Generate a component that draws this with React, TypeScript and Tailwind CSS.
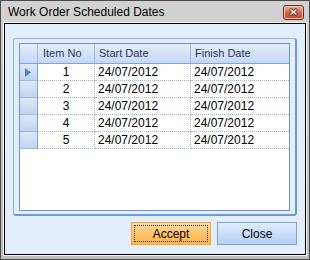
const rows = [1, 2, 3, 4, 5];

function CloseBox() {
  return (
    <div className="w-[21px] h-[15px] rounded-[3px] border border-[#6b2a1c] bg-gradient-to-b from-[#eab4a3] via-[#d9674b] to-[#c0452a] flex items-center justify-center shadow-[inset_0_0_0_1px_#f3c6b8]">
      <svg width="9" height="8" viewBox="0 0 9 8">
        <path d="M1 1 L8 7 M8 1 L1 7" stroke="#5a2a20" strokeWidth="3.2" />
        <path d="M1.5 1.5 L7.5 6.5 M7.5 1.5 L1.5 6.5" stroke="#ffffff" strokeWidth="1.6" />
      </svg>
    </div>
  );
}

export default function App() {
  return (
    <div className="w-[310px] h-[260px] border border-[#4a4a4a] bg-gradient-to-b from-[#d2d2d2] to-[#bdbdbd] flex flex-col px-[3px] pb-[4px] font-['Liberation_Sans',Arial,sans-serif]">
      <div className="h-[22px] flex items-center justify-between pl-[4px] pr-[2px]">
        <span className="text-[12px] text-black leading-none">Work Order Scheduled Dates</span>
        <CloseBox />
      </div>
      <div className="flex-1 border border-black shadow-[0_0_0_1px_#f2f2f2] bg-[#e3eefc] flex flex-col px-[8px] pt-[14px]">
        <div className="h-[178px] rounded-[3px] border-t border-l border-[#8fb1e6] border-r-2 border-b-2 border-r-[#6f99da] border-b-[#6f99da] pl-[5px] pt-[4px]">
          <div className="w-[271px] h-[168px] border border-[#6b93d6] bg-white flex flex-col text-[11px]">
            <div className="h-[20px] flex border-b border-[#7fa3dc] bg-gradient-to-b from-[#e4edfa] to-[#c4d7f2] text-[#1e3a5e]">
              <div className="w-[18px] border-r border-[#9ab8e4]" />
              <div className="w-[57px] border-r border-[#9ab8e4] flex items-center pl-[5px]">Item No</div>
              <div className="w-[96px] border-r border-[#9ab8e4] flex items-center pl-[4px]">Start Date</div>
              <div className="flex-1 flex items-center pl-[4px]">Finish Date</div>
            </div>
            {rows.map((n) => (
              <div key={n} className="h-[17px] flex text-black text-[12px]">
                <div className="w-[18px] border-r border-b border-r-[#7fa3dc] border-b-[#9ab8e4] bg-gradient-to-b from-[#dde8f8] to-[#c0d4f0] flex items-center pl-[5px]">
                  {n === 1 && (
                    <svg width="6" height="9" viewBox="0 0 6 9">
                      <path d="M0 0 L6 4.5 L0 9 Z" fill="#4f7fc8" />
                    </svg>
                  )}
                </div>
                <div className="w-[57px] border-r border-b border-dotted border-[#9fb3d6] flex items-center justify-center">{n}</div>
                <div className="w-[96px] border-r border-b border-dotted border-[#9fb3d6] flex items-center pl-[3px]">24/07/2012</div>
                <div className="flex-1 border-b border-dotted border-[#9fb3d6] flex items-center pl-[3px]">24/07/2012</div>
              </div>
            ))}
          </div>
        </div>
        <div className="flex justify-end gap-[6px] mt-[6px] text-[12px] text-black">
          <div className="w-[80px] h-[23px] border border-[#f5a646] bg-gradient-to-b from-[#ffdca3] via-[#ffc46a] to-[#ffb240] p-[2px]">
            <div className="w-full h-full border border-dotted border-[#3a3a3a] flex items-center justify-center">Accept</div>
          </div>
          <div className="w-[80px] h-[23px] border border-[#7ea3da] bg-gradient-to-b from-[#e1ecfc] to-[#b5cff5] flex items-center justify-center">Close</div>
        </div>
      </div>
    </div>
  );
}
